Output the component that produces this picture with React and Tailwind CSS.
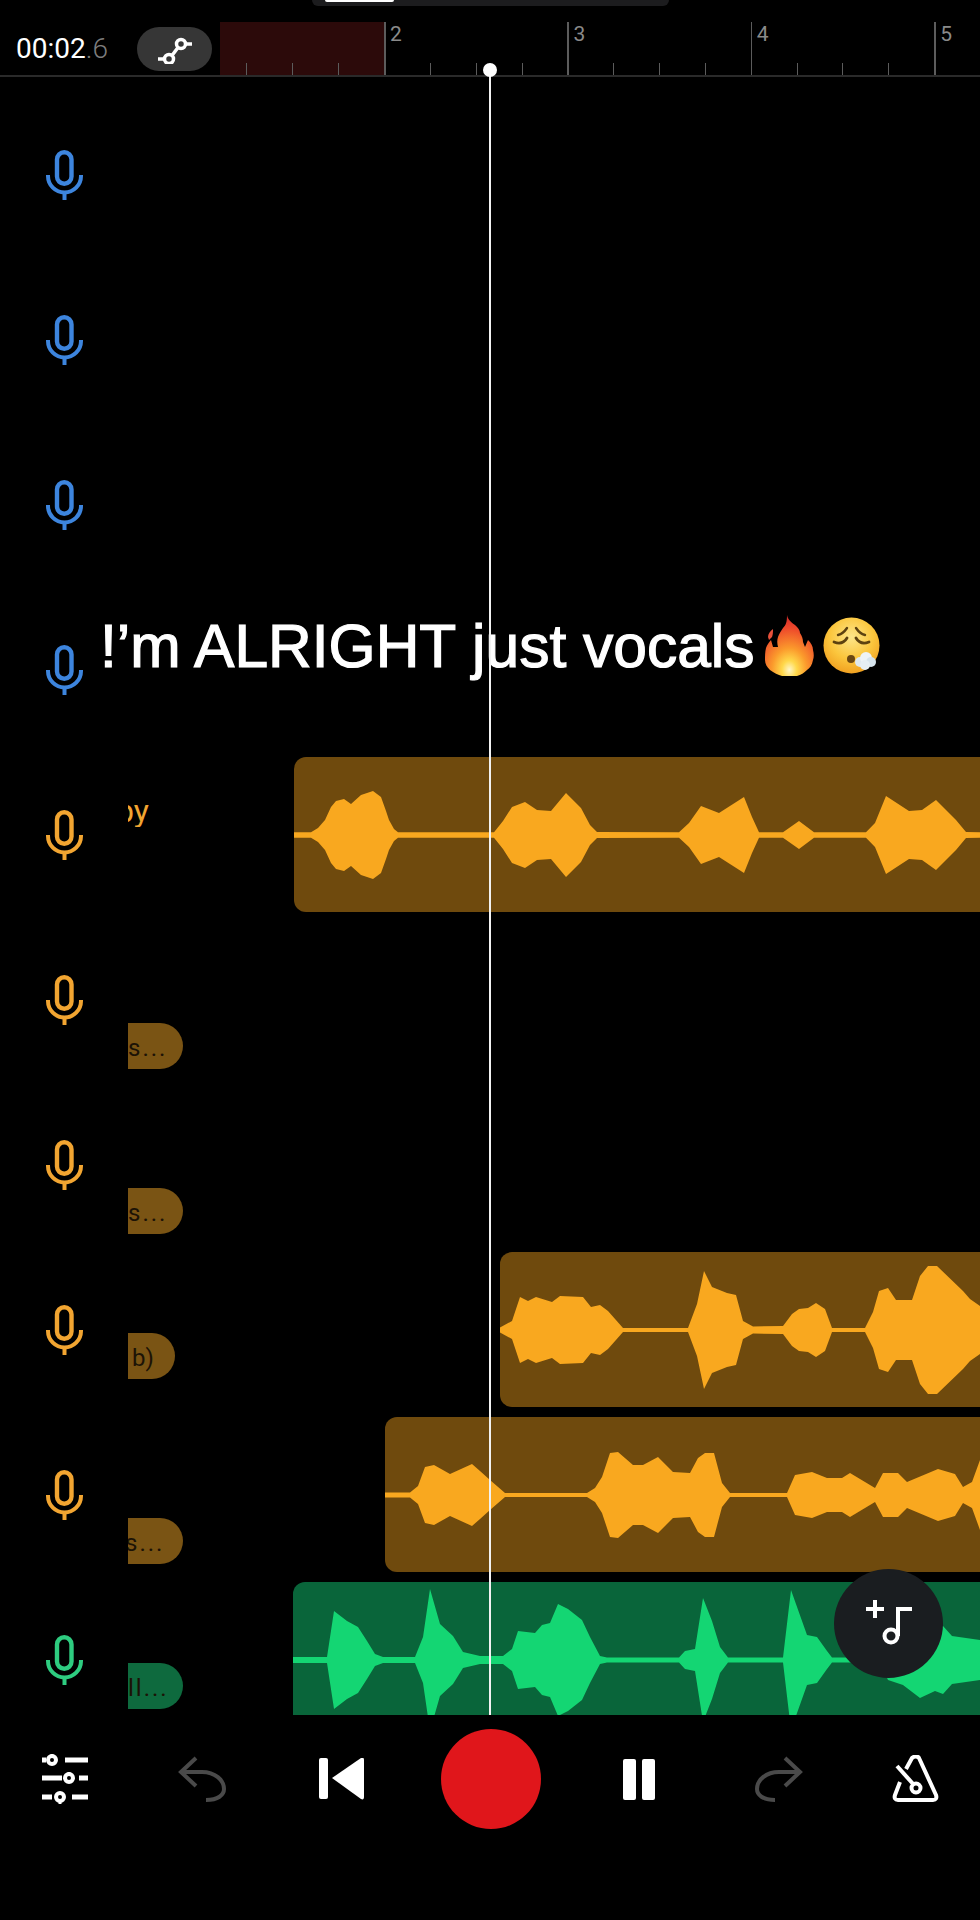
import React from 'react';

// wave outlines: [x on the page, half height]
const wave5 = [[294,2.7],[311,2.7],[318,7],[325,15],[331,28],[336,34],[344,36],[351,31],[361,40],[373,44],[381,38],[386,24],[389,15],[394,6],[398,2.7],[487,2.7],[494,2.7],[503,14],[512,28],[525,33],[537,25],[551,24],[566,42],[581,27],[590,10],[597,3],[679,2.7],[689,12],[701,29],[719,22],[744,38],[752,18],[759,2.7],[783,2.7],[799,14],[814,2.7],[866,2.7],[875,12],[886,39],[909,24],[922,25],[936,35],[956,15],[966,3],[980,2.7]];
const wave8 = [[500,2.5],[512,9],[520,33],[528,29],[536,33],[552,28],[560,34],[583,33],[591,23],[600,25],[608,19],[623,2],[688,2],[697,26],[704,59],[712,43],[727,37],[736,35],[743,9],[753,3.5],[783,4],[792,16],[799,21],[808,22],[816,27],[825,21],[832,2],[865,2],[873,18],[879,39],[888,42],[896,30],[912,30],[920,54],[928,64],[937,64],[963,39],[970,31],[980,24]];
const wave9 = [[385,2.5],[410,2.5],[418,9],[425,28],[434,30],[450,21],[472,31],[480,24],[490,15],[505,2],[587,2],[595,7],[602,18],[610,42],[618,43],[633,30],[643,30],[658,38],[673,23],[690,22],[698,37],[705,42],[714,42],[722,12],[730,2],[787,2],[795,20],[812,23],[827,17],[842,17],[850,22],[875,7],[883,22],[898,22],[907,13],[938,26],[955,21],[963,8],[972,13],[980,35]];
const wave10 = [[293,3],[327,3],[334,49],[347,39],[358,33],[367,19],[375,6],[383,3],[415,3],[423,23],[430,71],[440,36],[453,24],[463,8],[480,4],[503,4],[512,11],[518,29],[535,27],[542,35],[550,37],[558,56],[568,51],[582,40],[590,23],[600,4],[607,2.5],[679,2.5],[685,9],[695,11],[703,62],[712,39],[720,13],[728,2.5],[783,2.5],[791,70],[807,25],[817,23],[827,9],[832,2.5],[880,2.5],[888,20],[903,25],[920,38],[935,31],[943,34],[952,24],[980,20]];

const tracks = [
  { mic: '#3d85de' },
  { mic: '#3d85de' },
  { mic: '#3d85de' },
  { mic: '#3d85de' },
  { mic: '#f2a531', word: 'py', labelClass: 'mt-[38px] justify-end w-[21px] text-[#f2a531] text-[32px]', lead: 'w-[166px]', left: 294, wave: wave5, clipClass: 'bg-[#6f4a0d]', fill: '#f9a81f' },
  { mic: '#f2a531', pill: 's...', pillClass: 'mt-[101px] w-[55px] bg-[#7a5414] tracking-[2px]' },
  { mic: '#f2a531', pill: 's...', pillClass: 'mt-[101px] w-[55px] bg-[#7a5414] tracking-[2px]' },
  { mic: '#f2a531', pill: 'b)', pillClass: 'mt-[81px] w-[47px] bg-[#7a5414] indent-[4px]', lead: 'w-[372px]', left: 500, wave: wave8, clipClass: 'bg-[#6f4a0d]', fill: '#f9a81f' },
  { mic: '#f2a531', pill: 's...', pillClass: 'mt-[101px] w-[55px] bg-[#7a5414] tracking-[2px] -indent-[3px]', lead: 'w-[257px]', left: 385, wave: wave9, clipClass: 'bg-[#6f4a0d]', fill: '#f9a81f' },
  { mic: '#2ecc80', pill: 'll...', pillClass: 'mt-[81px] w-[55px] bg-[#0e6a3e] tracking-[2px]', lead: 'w-[165px]', left: 293, wave: wave10, clipClass: 'bg-[#09653a]', fill: '#14d673' },
];

function Mic({ color }) {
  return (
    <svg width="37" height="50" viewBox="0 0 37 50" fill="none" stroke={color} strokeWidth="4" className="mt-[53px] ml-[46px] shrink-0">
      <rect x="11" y="2.2" width="14.5" height="31.6" rx="7.25" strokeWidth="4.4" />
      <path d="M2 25v1a16.5 16.5 0 0 0 33 0v-1" />
      <path d="M18.5 43v7" />
    </svg>
  );
}

function Wave({ left, points, fill }) {
  const top = points.map(([x, h]) => `${x},${-h}`);
  const bottom = [...points].reverse().map(([x, h]) => `${x},${h}`);
  return (
    <svg viewBox={`${left} -78 ${980 - left} 155`} className="block w-full h-full">
      <polygon points={[...top, ...bottom].join(' ')} fill={fill} />
    </svg>
  );
}

function Track({ t }) {
  return (
    <div className="flex h-[165px]">
      <div className="flex w-[128px] shrink-0">
        <Mic color={t.mic} />
      </div>
      <div className={`shrink-0 ${t.lead || 'w-[100px]'}`}>
        {t.word && (
          <div className={`flex overflow-hidden leading-none ${t.labelClass}`}>{t.word}</div>
        )}
        {t.pill && (
          <div className={`h-[46px] rounded-r-[23px] overflow-hidden whitespace-nowrap text-[24px] leading-[50px] text-[#1c1306] ${t.pillClass}`}>
            {t.pill}
          </div>
        )}
      </div>
      {t.wave && (
        <div className={`flex-1 h-[155px] rounded-l-[12px] overflow-hidden ${t.clipClass}`}>
          <Wave left={t.left} points={t.wave} fill={t.fill} />
        </div>
      )}
    </div>
  );
}

function RulerSegment({ label }) {
  return (
    <div className="relative flex w-[183.4px] h-full shrink-0 items-end">
      <div className="absolute left-0 top-0 h-full w-[1.5px] bg-[#5c5c5c]" />
      <span className="absolute left-[6px] top-0 text-[21px] leading-[24px] text-[#8a8a8a]">{label}</span>
      <div className="w-1/4" />
      <div className="w-1/4 h-[12px] border-l border-[#5c5c5c]" />
      <div className="w-1/4 h-[12px] border-l border-[#5c5c5c]" />
      <div className="w-1/4 h-[12px] border-l border-[#5c5c5c]" />
    </div>
  );
}

function Header() {
  return (
    <div className="flex h-[77px] pt-[22px] pl-[16px] border-b-2 border-[#2a2a2a]">
      <div className="flex items-center w-[121px] shrink-0 text-[28px] font-normal text-white">
        00:02<span className="text-[#7d7d7d] font-light">.6</span>
      </div>
      <div className="flex items-center shrink-0 mr-[8px]">
        <div className="flex items-center justify-center w-[75px] h-[44px] rounded-[22px] bg-[#363636]">
          <svg width="38" height="30" viewBox="155 32 38 30" fill="none" stroke="#fff" strokeWidth="3.5">
            <circle cx="168" cy="57" r="4.5" />
            <circle cx="180" cy="42" r="4.5" />
            <path d="M157 57h6.5M171 53.5l6-8M184.5 42h6.5" />
          </svg>
        </div>
      </div>
      <div className="relative flex flex-1 overflow-hidden">
        <div className="absolute left-0 top-0 h-full w-[164px] bg-[#2c0a0a]" />
        <div className="relative flex h-full -ml-[19.4px]">
          <RulerSegment label="" />
          <RulerSegment label="2" />
          <RulerSegment label="3" />
          <RulerSegment label="4" />
          <RulerSegment label="5" />
        </div>
      </div>
    </div>
  );
}

function Fire() {
  return (
    <svg width="50" height="62" viewBox="0 0 50 62" className="shrink-0">
      <defs>
        <radialGradient id="fireFill" cx="0.5" cy="0.9" r="0.85">
          <stop offset="0" stopColor="#fff6c8" />
          <stop offset="0.18" stopColor="#ffd84a" />
          <stop offset="0.42" stopColor="#fb9a2c" />
          <stop offset="0.8" stopColor="#ee4a2b" />
          <stop offset="1" stopColor="#d9302a" />
        </radialGradient>
      </defs>
      <path d="M22 0c1 5 4 7 8 10 3 3 5 5 5 8 2 3 3 6 3 9l2 5 3-7c3 3 5 6 5 10 1 4 1 7 0 10-1 5-3 8-6 10-3 3-6 5-10 6H17c-4-1-8-3-12-6-3-3-5-6-5-10 0-4 0-8 1-12 1-3 3-6 5-8l2 7 5 0c-1-4-1-7 0-10 1-3 3-6 5-9 3-3 4-6 4-13z" fill="url(#fireFill)" />
      <path d="M8 14c-3 2-5 5-5 8l1 3 3-3c1-3 1-5 1-8z" fill="#e8513a" />
    </svg>
  );
}

function ExhaleFace() {
  return (
    <svg width="60" height="58" viewBox="0 0 60 58" className="shrink-0 ml-[8px]" fill="none">
      <defs>
        <radialGradient id="faceFill" cx="0.5" cy="0.35" r="0.7">
          <stop offset="0" stopColor="#fde68a" />
          <stop offset="0.55" stopColor="#fbc63d" />
          <stop offset="1" stopColor="#ef9a1c" />
        </radialGradient>
      </defs>
      <circle cx="28.5" cy="28.5" r="28" fill="url(#faceFill)" />
      <path d="M15 18c4-1 7-4 9-7M42 18c-4-1-7-4-9-7" stroke="#5d4210" strokeWidth="2.4" strokeLinecap="round" />
      <path d="M11 25c5 2 10 1 13-4M46 25c-5 2-10 1-13-4" stroke="#5d4210" strokeWidth="2.8" strokeLinecap="round" />
      <circle cx="28" cy="42" r="4" fill="#6b4712" />
      <circle cx="37" cy="45" r="5" fill="#dfe8ee" />
      <circle cx="43" cy="41" r="6" fill="#eef3f6" />
      <circle cx="48" cy="45" r="5" fill="#d6e4ec" />
      <circle cx="42" cy="48" r="5" fill="#e6eef3" />
    </svg>
  );
}

function Caption() {
  return (
    <div className="absolute left-[100px] top-[614px] flex items-center h-[64px]">
      <span className="font-['Liberation_Sans',sans-serif] text-[60.5px] leading-none text-white whitespace-nowrap [-webkit-text-stroke:1.2px_white] mr-[11px]">
        !’m ALRIGHT just vocals
      </span>
      <Fire />
      <ExhaleFace />
    </div>
  );
}

function Controls() {
  return (
    <div className="flex pt-[14px] pl-[42px]">
      <div className="flex items-center h-[100px]">
        <svg width="46" height="50" viewBox="42 1755 46 50" fill="none" stroke="#fff">
          <path d="M42 1761h4M65 1761h23M42 1779h20M79 1779h9M42 1798h10M72 1798h16" strokeWidth="5" />
          <circle cx="52" cy="1761" r="4" strokeWidth="4" />
          <circle cx="69" cy="1779" r="4" strokeWidth="4" />
          <circle cx="60" cy="1798" r="4" strokeWidth="4" />
          <path d="M52 1755v2M69 1773v2M60 1802v3" strokeWidth="3" />
        </svg>
      </div>
      <div className="flex items-center h-[100px] ml-[90px]">
        <svg width="48" height="46" viewBox="178 1757 48 46" fill="none" stroke="#4a4a4a" strokeWidth="4">
          <path d="M196 1759l-15 14 15 14" />
          <path d="M181 1773h21c13 0 22 8 22 17 0 6-6 11-18 11" />
        </svg>
      </div>
      <div className="flex items-center h-[100px] ml-[93px]">
        <svg width="46" height="42" viewBox="319 1759 46 42" fill="#fff">
          <rect x="319" y="1759" width="9" height="41" rx="2" />
          <path d="M332 1779l29-20c2-1 3 0 3 2v37c0 2-1 3-3 2z" />
        </svg>
      </div>
      <div className="w-[100px] h-[100px] ml-[76px] rounded-full bg-[#e0161b]" />
      <div className="flex items-center h-[100px] ml-[82px] gap-[6px]">
        <div className="w-[13px] h-[41px] rounded-[2px] bg-white" />
        <div className="w-[13px] h-[41px] rounded-[2px] bg-white" />
      </div>
      <div className="flex items-center h-[100px] ml-[100px]">
        <svg width="48" height="46" viewBox="178 1757 48 46" fill="none" stroke="#4a4a4a" strokeWidth="4" className="-scale-x-100">
          <path d="M196 1759l-15 14 15 14" />
          <path d="M181 1773h21c13 0 22 8 22 17 0 6-6 11-18 11" />
        </svg>
      </div>
      <div className="flex items-center h-[100px] ml-[89px]">
        <svg width="48" height="48" viewBox="892 1756 48 48" fill="none" stroke="#fff" strokeWidth="4" strokeLinejoin="round">
          <path d="M906 1770l6-11c2-2 6-2 7 0l17 37c1 3 0 5-3 5h-35c-3 0-4-2-3-5l5-13" />
          <path d="M897 1767l17 19" />
          <circle cx="916" cy="1789" r="4.5" />
        </svg>
      </div>
    </div>
  );
}

export default function App() {
  return (
    <div className="relative w-full h-[1920px] overflow-hidden bg-black font-['Roboto',sans-serif]">
      <div className="absolute left-[312px] top-0 w-[357px] h-[6px] rounded-b-[10px] bg-[#1c1c1e]">
        <div className="ml-[13px] w-[69px] h-[2px] bg-white rounded-b-[2px]" />
      </div>

      <Header />

      <div className="h-[1638px] pt-[20px] overflow-hidden">
        {tracks.map((t, i) => (
          <Track key={i} t={t} />
        ))}
      </div>

      <Controls />

      <Caption />

      {/* playhead */}
      <div className="absolute left-[489px] top-[68px] w-[2px] h-[1647px] bg-[#f2f2f2]" />
      <div className="absolute left-[483px] top-[63px] w-[14px] h-[14px] rounded-full bg-white" />

      {/* add track button */}
      <div className="absolute left-[834px] top-[1569px] flex items-center justify-center w-[109px] h-[109px] rounded-full bg-[#1a1d20]">
        <svg width="50" height="50" viewBox="864 1600 50 50" fill="none" stroke="#fff" strokeWidth="4">
          <path d="M866 1610h18M875 1601v18" />
          <circle cx="891" cy="1637" r="6.5" />
          <path d="M898 1637v-27h14" />
        </svg>
      </div>
    </div>
  );
}
